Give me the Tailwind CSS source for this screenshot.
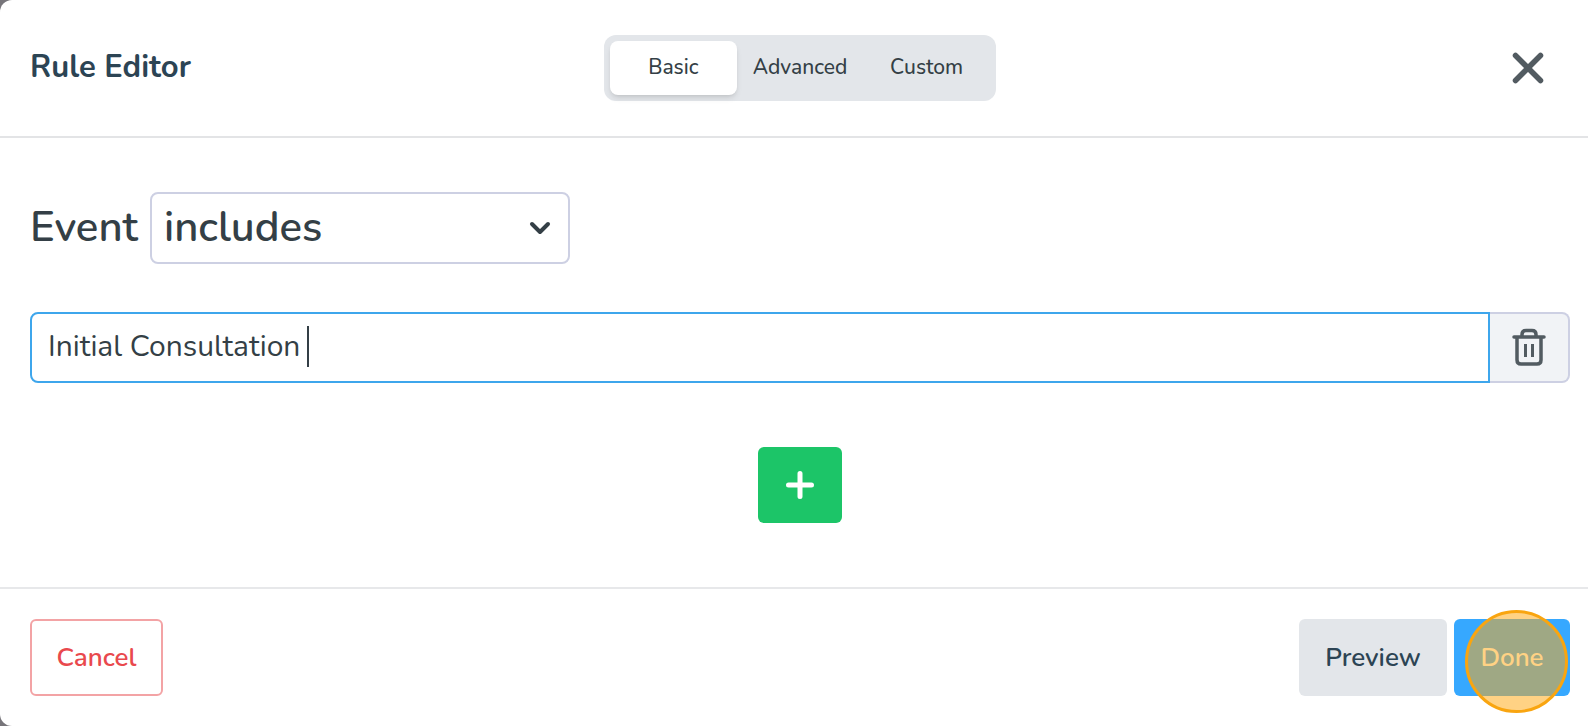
<!DOCTYPE html>
<html lang="en">
<head>
    <meta charset="UTF-8">
    <meta name="viewport" content="width=device-width, initial-scale=1.0">
    <title>Rule Editor</title>
    <script src="https://cdn.jsdelivr.net/npm/@tailwindcss/browser@4"></script>
</head>
<body class="bg-[#77757a] min-h-screen flex flex-col font-['Nunito','Lato',sans-serif] text-[#343f46]">
    <div role="dialog" aria-labelledby="dialog-title" class="bg-white rounded-l-xl flex-1 flex flex-col">
        <header class="grid grid-cols-[1fr_auto_1fr] items-center h-[138px] pl-[30px] pr-[18px] border-b-2 border-[#e3e4e6]">
            <h1 id="dialog-title" class="pb-0.5 text-[31px] leading-10 font-bold text-[#2c4454]">Rule Editor</h1>
            <div class="grid grid-cols-3 w-[392px] h-[66px] p-[6px] rounded-xl bg-[#e3e6ea] text-[21px] font-medium">
                <button type="button" class="bg-white rounded-lg shadow-md">Basic</button>
                <button type="button">Advanced</button>
                <button type="button">Custom</button>
            </div>
            <button type="button" aria-label="Close" class="justify-self-end p-6">
                <svg class="w-9 h-9" viewBox="0 0 36 36" fill="none" stroke="#525b61" stroke-width="5.500" stroke-linecap="round">
                    <path d="M5.500 5.500 30.500 30.500M30.500 5.500 5.500 30.500"/>
                </svg>
            </button>
        </header>

        <main class="flex-1 flex flex-col pl-[30px] pr-[18px] pt-[54px]">
            <div class="flex items-center gap-3 text-[42px] font-semibold">
                <label for="match" class="pb-0.5">Event</label>
                <div class="relative">
                    <select id="match" class="appearance-none w-[420px] h-[72px] pl-3 pb-0.5 border-2 border-[#cdd0e3] rounded-lg bg-white">
                        <option>includes</option>
                    </select>
                    <svg class="absolute right-[18px] top-6 w-6 h-6 pointer-events-none" viewBox="0 0 24 24" fill="none" stroke="#343f46" stroke-width="4" stroke-linecap="round" stroke-linejoin="round">
                        <path d="M4 8 12 16 20 8"/>
                    </svg>
                </div>
            </div>

            <div class="flex mt-12 h-[71px]">
                <div class="relative flex-1">
                    <input type="text" aria-label="Event text" value="Initial Consultation " class="w-full h-full pl-4 pb-0.5 text-[30px] border-2 border-[#3ea6ec] rounded-l-lg outline-none">
                    <!-- text cursor -->
                    <span class="absolute left-[277px] top-[14px] w-[2px] h-[41px] bg-[#343f46]"></span>
                </div>
                <button type="button" aria-label="Delete" class="flex items-center justify-center w-20 pb-0.5 bg-[#f1f3f6] border-2 border-l-0 border-[#cdd0e3] rounded-r-lg">
                    <svg class="w-9 h-10" viewBox="0 0 36 40" fill="none" stroke="#525b61" stroke-width="3.500" stroke-linecap="round" stroke-linejoin="round">
                        <path d="M3 10H33M6 10V33Q6 37 10 37H26Q30 37 30 33V10M11 10V7.500Q11 3.500 15 3.500H21Q25 3.500 25 7.500V10"/>
                        <path d="M14.500 17V30M21.500 17V30" stroke-width="3" stroke-linecap="butt"/>
                    </svg>
                </button>
            </div>

            <button type="button" aria-label="Add" class="flex items-center justify-center self-center w-[84px] h-[76px] mt-16 rounded-md bg-[#1cc568]">
                <svg class="w-8 h-8" viewBox="0 0 32 32" fill="none" stroke="#fff" stroke-width="5" stroke-linecap="round">
                    <path d="M16 4.500V27.500M4.500 16H27.500"/>
                </svg>
            </button>
        </main>

        <footer class="flex items-center gap-[7px] h-[139px] pl-[30px] pr-[18px] border-t-2 border-[#e7e8ea] text-[26px] font-semibold">
            <button type="button" class="w-[133px] h-[77px] mr-auto border-2 border-[#f3a3a5] rounded-md text-[#e9494d]">Cancel</button>
            <button type="button" class="w-[148px] h-[77px] rounded-md bg-[#e3e6ea] text-[#2c4454]">Preview</button>
            <div class="relative">
                <button type="button" class="w-[116px] h-[77px] rounded-md bg-[#36a8ff] text-white">Done</button>
                <!-- click highlight -->
                <span class="absolute left-[11px] -top-[9px] w-[103px] h-[103px] rounded-full border-3 border-[#f9a510] bg-[#ffa812]/52 pointer-events-none"></span>
            </div>
        </footer>
    </div>
</body>
</html>
